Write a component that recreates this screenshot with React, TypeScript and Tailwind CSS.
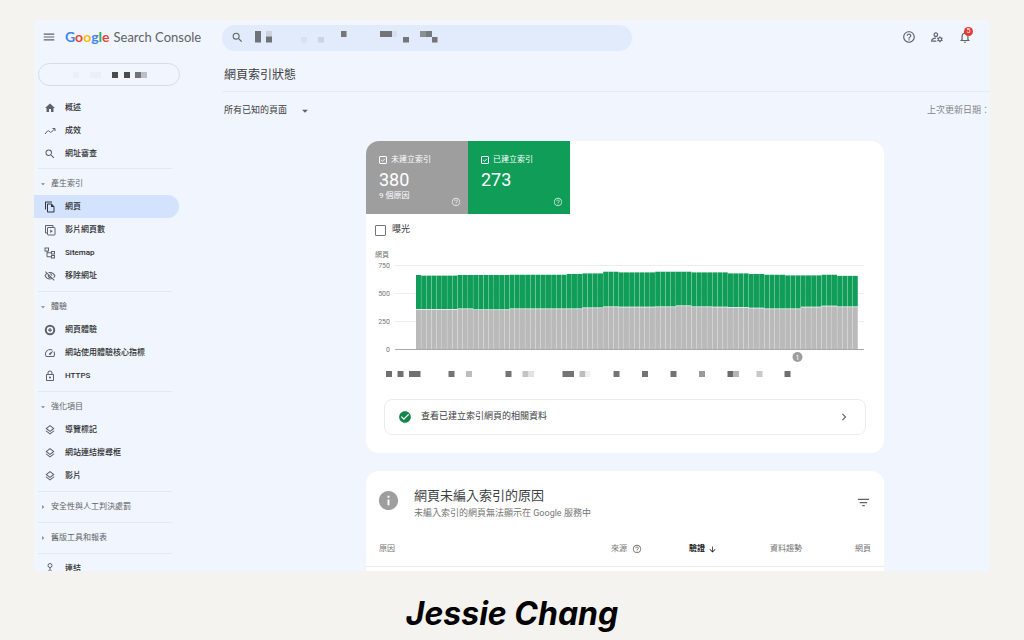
import type { ReactNode } from "react";
import {
  MdArrowDownward,
  MdArrowDropDown,
  MdArrowRight,
  MdCheckCircle,
  MdChevronRight,
  MdFilterList,
  MdHelpOutline,
  MdHome,
  MdInfo,
  MdMenu,
  MdOutlineFileCopy,
  MdOutlineLayers,
  MdOutlineLock,
  MdOutlineManageAccounts,
  MdOutlineNotifications,
  MdOutlineSpeed,
  MdOutlineVisibilityOff,
  MdSearch,
} from "react-icons/md";

// ─── Small line icons ───
const Line = ({ children }: { children: ReactNode }) => (
  <svg viewBox="0 0 24 24" className="size-3" fill="none" stroke="currentColor" strokeWidth="2">
    {children}
  </svg>
);

const TrendIcon = () => (
  <Line>
    <path d="M2 18l5-6c1-1 2-1 3 0l2 2c1 1 2 1 3 0l6-6M17 7h5v5" />
  </Line>
);

const VideoPagesIcon = () => (
  <Line>
    <path d="M18 6V3H3v15h3" />
    <rect x="7" y="7" width="15" height="15" rx="1" />
    <path d="M12.5 11v7l5-3.5z" fill="currentColor" stroke="none" />
  </Line>
);

const SitemapIcon = () => (
  <Line>
    <rect x="2" y="2" width="7" height="6" />
    <rect x="15" y="9" width="6" height="5" />
    <rect x="15" y="17" width="6" height="5" />
    <path d="M6 8v11.500h9M6 11.500h9" />
  </Line>
);

const ExperienceIcon = () => (
  <Line>
    <circle cx="12" cy="12" r="8.5" strokeWidth="4" />
    <path d="M12 8v8M8 12h8" strokeWidth="2.5" />
  </Line>
);

const LinksIcon = () => (
  <Line>
    <circle cx="12" cy="5" r="4" />
    <path d="M12 9v4M1 18h6l5-5 5 5h6" />
  </Line>
);

// ─── Blocks that stand in for hidden names and dates ───
type Block = [x: number, y: number, w: number, h: number, fill: string];

const Blocks = ({ items }: { items: Block[] }) => (
  <>
    {items.map(([x, y, w, h, fill]) => (
      <rect key={`${x}-${y}`} x={x} y={y} width={w} height={h} fill={fill} />
    ))}
  </>
);

const searchBlocks: Block[] = [
  [0, 0, 6, 11.5, "#6f7276"],
  [11, 0, 6, 5.5, "#cdd3de"],
  [11, 5.5, 6, 6, "#6f7276"],
  [46, 6, 6, 5.5, "#d7e0ee"],
  [63, 6, 6, 5.5, "#cbd4e2"],
  [86, 0, 5.5, 6, "#747678"],
  [125, 0, 12, 6, "#727476"],
  [137, 0, 5, 6, "#d6dfee"],
  [148, 6, 6, 5.5, "#747678"],
  [165, 0, 6, 6, "#8c8f94"],
  [171, 0, 6, 6, "#777a7e"],
  [177, 6, 5.5, 5.5, "#727476"],
];

const propertyBlocks: Block[] = [
  [0, 0, 6, 6, "#eceff5"],
  [17, 0, 11, 6, "#eceff5"],
  [39, 0, 6, 6, "#4b4b4d"],
  [51, 0, 6, 6, "#4b4b4d"],
  [62, 0, 6, 6, "#747476"],
  [68, 0, 6, 6, "#bcbfc4"],
];

const dateBlocks: Block[] = [
  [20, 125, 6, 6, "#707070"],
  [31.5, 125, 6, 6, "#707070"],
  [43, 125, 11.5, 6, "#707070"],
  [82.5, 125, 6, 6, "#747474"],
  [100, 125, 6, 6, "#bdbdbd"],
  [139.5, 125, 6, 6, "#747474"],
  [156.5, 125, 6, 6, "#c4c4c4"],
  [162.5, 125, 5.5, 6, "#e2e2e2"],
  [196.5, 125, 11.5, 6, "#747474"],
  [213.5, 125, 6, 6, "#bdbdbd"],
  [219.5, 125, 5, 6, "#f1f1f1"],
  [247.5, 125, 6, 6, "#747474"],
  [276, 125, 6, 6, "#747474"],
  [304.5, 125, 6, 6, "#747474"],
  [333, 125, 6, 6, "#9a9a9a"],
  [361.5, 125, 6, 6, "#6a6a6a"],
  [367.5, 125, 5.5, 6, "#b5b5b5"],
  [390.5, 125, 6, 6, "#c8c8c8"],
  [418.5, 125, 6, 6, "#6e6e6e"],
];

// ─── Navigation ───
type NavItem = { label: string; icon: ReactNode; active?: boolean };
type NavGroup = { title: string; items: NavItem[] };

const topItems: NavItem[] = [
  { label: "概述", icon: <MdHome /> },
  { label: "成效", icon: <TrendIcon /> },
  { label: "網址審查", icon: <MdSearch /> },
];

const groups: NavGroup[] = [
  {
    title: "產生索引",
    items: [
      { label: "網頁", icon: <MdOutlineFileCopy />, active: true },
      { label: "影片網頁數", icon: <VideoPagesIcon /> },
      { label: "Sitemap", icon: <SitemapIcon /> },
      { label: "移除網址", icon: <MdOutlineVisibilityOff /> },
    ],
  },
  {
    title: "體驗",
    items: [
      { label: "網頁體驗", icon: <ExperienceIcon /> },
      { label: "網站使用體驗核心指標", icon: <MdOutlineSpeed /> },
      { label: "HTTPS", icon: <MdOutlineLock /> },
    ],
  },
  {
    title: "強化項目",
    items: [
      { label: "導覽標記", icon: <MdOutlineLayers /> },
      { label: "網站連結搜尋框", icon: <MdOutlineLayers /> },
      { label: "影片", icon: <MdOutlineLayers /> },
    ],
  },
  { title: "安全性與人工判決處罰", items: [] },
  { title: "舊版工具和報表", items: [] },
];

const NavLink = ({ label, icon, active }: NavItem) => (
  <a
    href="#"
    className={`flex h-[23px] items-center gap-[9px] rounded-r-full pl-[10px] text-[8px] font-medium text-[#2b2d30] ${
      active ? "bg-[#d3e3fd]" : ""
    }`}
  >
    <span className={`text-[12px] ${active ? "text-[#30343a]" : "text-[#5f6368]"}`}>{icon}</span>
    {label}
  </a>
);

const Divider = () => <hr className="mr-[7px] ml-1 border-[#e4e8f0]" />;

const Sidebar = () => (
  <aside className="w-[145px] shrink-0">
    <button
      aria-label="選取資源"
      className="mt-[9px] ml-1 flex h-[23px] w-[142px] items-center rounded-full border border-[#d9dce3] pl-[34px]"
    >
      <svg width="76" height="6">
        <Blocks items={propertyBlocks} />
      </svg>
    </button>
    <nav className="mt-[10px]">
      <div className="pb-[3px]">
        {topItems.map((item) => (
          <NavLink key={item.label} {...item} />
        ))}
      </div>
      {groups.map((group) => (
        <div key={group.title}>
          <Divider />
          <div className="pt-[3px] pb-1">
            <button className="flex h-[23px] items-center gap-[3px] pl-1 text-[8px] text-[#5f6368]">
              <span className="text-[10px] text-[#80868b]">
                {group.items.length ? <MdArrowDropDown /> : <MdArrowRight />}
              </span>
              {group.title}
            </button>
            {group.items.map((item) => (
              <NavLink key={item.label} {...item} />
            ))}
          </div>
        </div>
      ))}
      <Divider />
      <div className="pt-[3px]">
        <NavLink label="連結" icon={<LinksIcon />} />
      </div>
    </nav>
  </aside>
);

const logo = [
  ["G", "text-[#4285f4]"],
  ["o", "text-[#ea4335]"],
  ["o", "text-[#fbbc05]"],
  ["g", "text-[#4285f4]"],
  ["l", "text-[#34a853]"],
  ["e", "text-[#ea4335]"],
];

const Header = () => (
  <header className="flex h-[34px] items-center pr-[18px]">
    <div className="flex w-[188px] shrink-0 items-center gap-[9px] pl-2">
      <button aria-label="主選單" className="text-[14px] text-[#5f6368]">
        <MdMenu />
      </button>
      <a
        href="#"
        className="flex items-baseline gap-1 font-['Lato','Roboto',sans-serif] text-[13px] whitespace-nowrap text-[#5f6368]"
      >
        <span className="text-[14px] font-bold">
          {logo.map(([letter, color], i) => (
            <span key={i} className={color}>
              {letter}
            </span>
          ))}
        </span>
        Search Console
      </a>
    </div>
    <div className="relative h-[26px] w-full max-w-[410px]">
      <input
        type="search"
        aria-label="檢查網址"
        className="h-full w-full rounded-full bg-[#e1ebfc] pl-8 text-[9px] outline-none"
      />
      <div className="pointer-events-none absolute inset-0 flex items-center gap-[11px] pl-[9px] text-[#5f6368]">
        <MdSearch className="text-[13px]" />
        <svg width="184" height="12">
          <Blocks items={searchBlocks} />
        </svg>
      </div>
    </div>
    <div className="ml-auto flex items-center gap-[14px] text-[14px] text-[#5f6368]">
      <button aria-label="說明">
        <MdHelpOutline />
      </button>
      <button aria-label="使用者設定">
        <MdOutlineManageAccounts />
      </button>
      <button aria-label="通知" className="relative">
        <MdOutlineNotifications />
        <span className="absolute -top-[3px] left-[6px] flex size-[9px] items-center justify-center rounded-full bg-[#e53935] text-[7px] leading-none text-white">
          5
        </span>
      </button>
    </div>
  </header>
);

// ─── Totals above the chart ───
type TileProps = { id: string; label: string; value: number; note?: string; color: string };

const Tile = ({ id, label, value, note, color }: TileProps) => (
  <div className={`relative h-[73px] w-[102px] pt-[13px] pl-[13px] text-white ${color}`}>
    <div className="flex h-3 items-center gap-1">
      <span className="relative size-2">
        <input
          id={id}
          type="checkbox"
          defaultChecked
          className="peer block size-2 appearance-none rounded-[1px] border border-white"
        />
        <svg viewBox="0 0 8 8" className="pointer-events-none absolute inset-0 hidden peer-checked:block">
          <path d="M2.200 4l1.300 1.300 2.400-2.500" fill="none" stroke="white" strokeWidth="0.900" />
        </svg>
      </span>
      <label htmlFor={id} className="text-[8px]">
        {label}
      </label>
    </div>
    <p className="mt-1 text-[18px] leading-5">{value}</p>
    {note && <p className="text-[8px] leading-3">{note}</p>}
    <button aria-label="說明" className="absolute right-[7px] bottom-[7px] text-[10px] text-white/70">
      <MdHelpOutline />
    </button>
  </div>
);

// [days, not indexed, total]
const runs = [
  [1, 357, 661],
  [7, 357, 655],
  [3, 362, 661],
  [7, 354, 661],
  [11, 362, 663],
  [3, 362, 670],
  [4, 371, 675],
  [3, 380, 690],
  [7, 378, 684],
  [4, 380, 690],
  [3, 389, 690],
  [4, 380, 684],
  [3, 378, 684],
  [4, 374, 675],
  [3, 369, 670],
  [4, 362, 663],
  [3, 362, 657],
  [4, 378, 657],
  [3, 387, 663],
  [4, 380, 653],
];

const days = runs.flatMap(([count, gray, total]) => Array.from({ length: count }, () => ({ gray, total })));

const BASE = 103;
const STEP = 5.2;
const scale = (v: number) => BASE - (v * 84) / 750;

const IndexChart = () => (
  <svg viewBox="0 0 518 134" className="block w-full" role="img" aria-label="網頁">
    <text x="9" y="11" fontSize="7" fill="#757575">
      網頁
    </text>
    {[750, 500, 250, 0].map((v) => (
      <g key={v}>
        <line
          x1="29"
          x2="498"
          y1={scale(v) + 0.5}
          y2={scale(v) + 0.5}
          stroke={v ? "#ededed" : "#a8a8a8"}
          strokeWidth="1"
        />
        <text x="24" y={scale(v) + 2.5} fontSize="7" textAnchor="end" fill="#757575">
          {v}
        </text>
      </g>
    ))}
    {days.map(({ gray, total }, i) => (
      <g key={i}>
        <rect x={50 + i * STEP} y={scale(total)} width="4.95" height={scale(gray) - scale(total)} fill="#0f9d58" />
        <rect x={50 + i * STEP} y={scale(gray) + 0.7} width="4.95" height={BASE - scale(gray) - 0.7} fill="#bababa" />
      </g>
    ))}
    <circle cx="431.5" cy="111" r="5" fill="#9e9e9e" />
    <text x="431.5" y="113.5" fontSize="7" textAnchor="middle" fill="white">
      1
    </text>
    <Blocks items={dateBlocks} />
  </svg>
);

const IndexCard = () => (
  <section className="overflow-hidden rounded-[13px] bg-white">
    <div className="flex">
      <Tile id="not-indexed" label="未建立索引" value={380} note="9 個原因" color="bg-[#9e9e9e]" />
      <Tile id="indexed" label="已建立索引" value={273} color="bg-[#0f9d58]" />
    </div>
    <label className="flex h-8 items-center gap-[6px] pl-[9px] text-[9px] text-[#3c4043]">
      <input type="checkbox" className="size-[11px] appearance-none rounded-[1px] border border-[#757575]" />
      曝光
    </label>
    <IndexChart />
    <a
      href="#"
      className="mx-[18px] mt-[19px] mb-[18px] flex h-9 items-center rounded-lg border border-[#ececec] pr-[14px] pl-[13px] text-[9px] text-[#3c4043]"
    >
      <MdCheckCircle className="mr-[9px] text-[14px] text-[#12864a]" />
      查看已建立索引網頁的相關資料
      <MdChevronRight className="ml-auto text-[14px] text-[#5f6368]" />
    </a>
  </section>
);

const ReasonsCard = () => (
  <section className="mt-[18px] grow rounded-t-[13px] bg-white">
    <div className="flex items-start pt-4 pr-[13px] pb-3 pl-[11px]">
      <MdInfo className="mt-[2px] mr-[14px] text-[23px] text-[#9e9e9e]" />
      <div>
        <h2 className="text-[13px] leading-[18px] text-[#3c4043]">網頁未編入索引的原因</h2>
        <p className="text-[9px] leading-4 text-[#757575]">未編入索引的網頁無法顯示在 Google 服務中</p>
      </div>
      <button aria-label="篩選" className="mt-2 ml-auto text-[15px] text-[#5f6368]">
        <MdFilterList />
      </button>
    </div>
    <table className="w-full table-fixed text-[8px] text-[#757575]">
      <thead>
        <tr className="h-[33px] border-b border-[#ececec] [&>th]:p-0 [&>th]:font-normal">
          <th className="text-left">
            <span className="pl-[13px]">原因</span>
          </th>
          <th className="w-[90px]">
            <span className="flex items-center justify-end gap-[5px]">
              來源
              <MdHelpOutline className="text-[10px]" />
            </span>
          </th>
          <th className="w-[75px]">
            <span className="flex items-center justify-end gap-[3px] font-bold text-[#202124]">
              驗證
              <MdArrowDownward className="text-[9px]" />
            </span>
          </th>
          <th className="w-[85px] text-right">資料趨勢</th>
          <th className="w-[82px] text-right">
            <span className="pr-[13px]">網頁</span>
          </th>
        </tr>
      </thead>
    </table>
  </section>
);

export default function App() {
  return (
    <div
      lang="zh-Hant"
      className="flex h-screen flex-col overflow-hidden bg-[#f4f3ef] font-['Roboto','Noto_Sans_CJK_TC',sans-serif]"
    >
      <div className="mx-[34px] mt-5 flex min-h-0 flex-1 flex-col overflow-hidden bg-[#f1f5fd]">
        <Header />
        <div className="flex min-h-0 flex-1">
          <Sidebar />
          <main className="ml-[43px] flex min-w-0 flex-1 flex-col">
            <h1 className="flex h-[38px] shrink-0 items-center border-b border-[#e6eaf1] pt-[5px] pl-[2px] text-[12px] text-[#3c4043]">
              網頁索引狀態
            </h1>
            <div className="flex h-[38px] shrink-0 items-center justify-between pl-[2px] text-[9px]">
              <div className="relative flex items-center text-[#3c4043]">
                <select aria-label="網頁範圍" className="w-[90px] appearance-none bg-transparent outline-none">
                  <option>所有已知的頁面</option>
                </select>
                <MdArrowDropDown className="pointer-events-none absolute right-[2px] text-[14px] text-[#5f6368]" />
              </div>
              <p className="text-[#80868b]">上次更新日期：</p>
            </div>
            <div className="mt-[11px] mr-[106px] ml-36 flex grow flex-col">
              <IndexCard />
              <ReasonsCard />
            </div>
          </main>
        </div>
      </div>
      <footer className="flex h-[69px] shrink-0 items-center justify-center pt-4 font-['Inter','Open_Sans',sans-serif] text-[32px] font-bold text-black italic">
        Jessie Chang
      </footer>
    </div>
  );
}
